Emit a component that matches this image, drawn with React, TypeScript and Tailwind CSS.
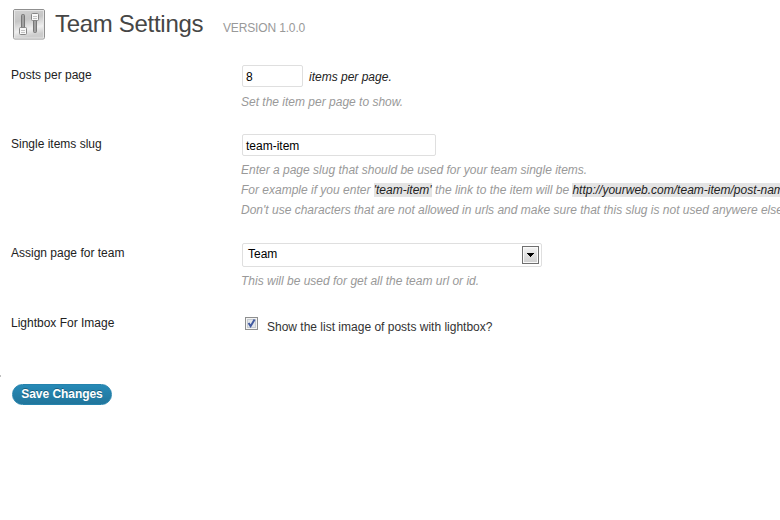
import type { ReactNode } from "react";

function Row({ label, className, children }: { label: string; className: string; children: ReactNode }) {
  return (
    <div className={`flex items-start ${className}`}>
      <div className="w-[230px] shrink-0 text-[#222]">{label}</div>
      <div className="shrink-0 whitespace-nowrap">{children}</div>
    </div>
  );
}

function SlidersIcon() {
  return (
    <svg width="34" height="32" viewBox="0 0 34 32" className="shrink-0">
      <defs>
        <linearGradient id="tile" x1="0" y1="0" x2="0.25" y2="1">
          <stop offset="0" stopColor="#d2d2d2" />
          <stop offset="0.4" stopColor="#c6c6c6" />
          <stop offset="0.75" stopColor="#f0f0f0" />
          <stop offset="1" stopColor="#cdcdcd" />
        </linearGradient>
      </defs>
      <rect x="1.5" y="1.5" width="31" height="29.5" rx="1.5" fill="#eee" stroke="#8f8f8f" />
      <rect x="2.5" y="2.5" width="29" height="27.5" fill="url(#tile)" stroke="#e6e6e6" strokeWidth="0.8" />
      <rect x="9.5" y="6.5" width="3" height="15" rx="1" fill="#a2a2a2" stroke="#777" />
      <rect x="21.5" y="9.5" width="3" height="15" rx="1" fill="#a2a2a2" stroke="#777" />
      <rect x="7.5" y="19.5" width="7" height="7" rx="1" fill="#f8f8f8" stroke="#868686" />
      <path d="M9 22.5h4M9 24.5h4" stroke="#c2c2c2" />
      <rect x="19.5" y="5.5" width="7" height="7" rx="1" fill="#f8f8f8" stroke="#868686" />
      <path d="M21 8.5h4M21 10.5h4" stroke="#c2c2c2" />
    </svg>
  );
}

export default function App() {
  return (
    <div className="relative flex h-[520px] w-[780px] flex-col items-start overflow-hidden bg-white pl-[11px] font-['Liberation_Sans',Arial,sans-serif] text-[12px] leading-5 text-[#333]">
      <span className="absolute top-[375px] left-0 h-[2px] w-px bg-[#c0c0c0]" />
      <header className="flex h-[65px] shrink-0 items-start pt-2 pl-px">
        <SlidersIcon />
        <h1 className="ml-[9px] w-[168px] text-[24px] leading-8 tracking-[-0.3px] text-[#464646]">Team Settings</h1>
        <span className="pt-[10px] tracking-[-0.15px] text-[#999]">VERSION 1.0.0</span>
      </header>

      <Row label="Posts per page" className="h-[69px] shrink-0">
        <div className="flex h-[22px] items-center pl-px text-[#222]">
          <div className="flex h-[22px] w-[61px] items-center rounded-[2px] border border-[#dfdfdf] bg-white pt-px pl-[3px] text-black">8</div>
          <span className="ml-[6px] pt-px italic">items per page.</span>
        </div>
        <p className="pt-[5px] text-[#999] italic">Set the item per page to show.</p>
      </Row>

      <Row label="Single items slug" className="h-[109px] shrink-0">
        <div className="ml-px flex h-[22px] w-[194px] items-center rounded-[2px] border border-[#dfdfdf] bg-white pt-px pl-[3px] text-black">team-item</div>
        <div className="pt-1 text-[#999] italic">
          <p>Enter a page slug that should be used for your team single items.</p>
          <p>For example if you enter <span className="bg-[#e4e4e4] text-[#222]">'team-item'</span> the link to the item will be <span className="bg-[#e4e4e4] text-[#222]">http://yourweb.com/team-item/post-name</span></p>
          <p>Don't use characters that are not allowed in urls and make sure that this slug is not used anywere else.</p>
        </div>
      </Row>

      <Row label="Assign page for team" className="h-[70px] shrink-0">
        <div className="ml-px flex h-6 w-[300px] items-center justify-between rounded-[2px] border border-[#dfdfdf] bg-white pr-[2px] pl-[5px] text-black">
          <span className="pb-[2px]">Team</span>
          <span className="flex h-[18px] w-[17px] items-center justify-center border border-[#707070] bg-linear-to-b from-[#f4f4f4] to-[#cfcfcf] shadow-[inset_0_0_0_1px_#fafafa]">
            <svg width="7" height="4" viewBox="0 0 7 4" shapeRendering="crispEdges"><path d="M0 0h7v1H6v1H5v1H4v1H3V3H2V2H1V1H0z" fill="#000" /></svg>
          </span>
        </div>
        <p className="pt-1 text-[#999] italic">This will be used for get all the team url or id.</p>
      </Row>

      <Row label="Lightbox For Image" className="h-[71px] shrink-0">
        <div className="flex items-start pl-1">
          <svg width="13" height="13" viewBox="0 0 13 13" className="mt-1">
            <rect x="0.5" y="0.5" width="12" height="12" fill="#f4f4f4" stroke="#8e8f8f" />
            <rect x="2.5" y="2.5" width="8" height="8" fill="#e3e6ea" stroke="#c6cbd1" />
            <path d="M3.6 6 5.6 9.2 9.6 2.6" fill="none" stroke="#4059a0" strokeWidth="2" />
          </svg>
          <span className="ml-[9px] pt-1">Show the list image of posts with lightbox?</span>
        </div>
      </Row>

      <button className="ml-px h-[21px] w-[100px] shrink-0 rounded-full border border-[#2583ad] bg-linear-to-b from-[#278ab7] to-[#21759b] text-[12px] leading-[19px] font-bold tracking-[-0.05px] text-white [text-shadow:0_-1px_0_rgba(0,0,0,0.3)]">
        Save Changes
      </button>
    </div>
  );
}
